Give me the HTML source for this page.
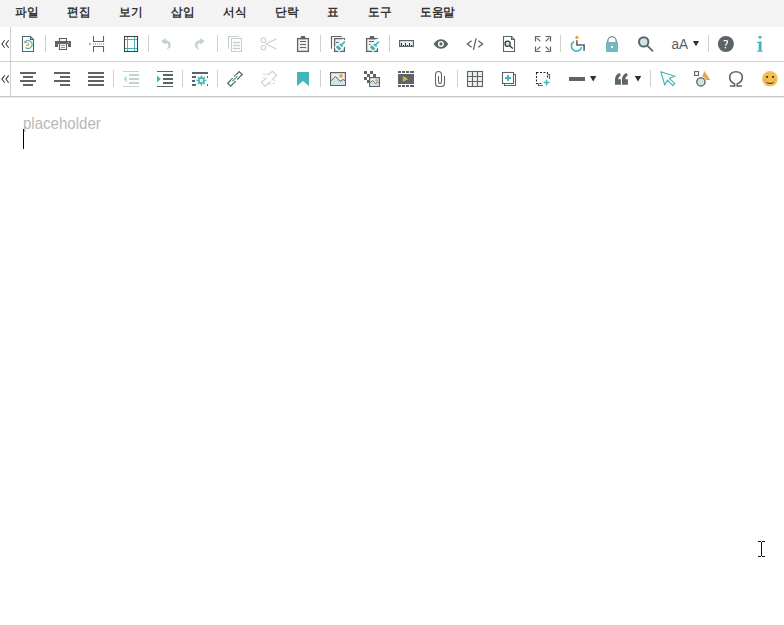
<!DOCTYPE html>
<html><head><meta charset="utf-8">
<style>
html,body{margin:0;padding:0;background:#fff;width:784px;height:625px;overflow:hidden;font-family:"Liberation Sans",sans-serif;}
#menubar{position:absolute;left:0;top:0;width:784px;height:27px;background:#f3f3f3;}
.mi{position:absolute;top:3px;font-size:12px;font-weight:bold;color:#333;line-height:18px;white-space:nowrap;transform:scaleX(0.97);transform-origin:0 0;}
#tb{position:absolute;left:0;top:27px;width:784px;height:70px;background:#fff;}
#ph{position:absolute;left:23px;top:114px;font-size:16px;color:#b8b8b8;line-height:20px;transform:scaleX(0.94);transform-origin:0 0;}
#caret{position:absolute;left:23px;top:129px;width:1px;height:20px;background:#000;}
svg{position:absolute;left:0;top:0;}
</style></head><body>
<div id="menubar">
<span class="mi" style="left:15px">파일</span>
<span class="mi" style="left:67px">편집</span>
<span class="mi" style="left:119px">보기</span>
<span class="mi" style="left:171px">삽입</span>
<span class="mi" style="left:223px">서식</span>
<span class="mi" style="left:275px">단락</span>
<span class="mi" style="left:327px">표</span>
<span class="mi" style="left:368px">도구</span>
<span class="mi" style="left:420px">도움말</span>
</div>
<div id="ph">placeholder</div>
<div id="caret"></div>
<svg width="784" height="625" viewBox="0 0 784 625">
<g shape-rendering="crispEdges">
<rect x="0" y="61" width="784" height="1" fill="#d2d2d2"/>
<rect x="0" y="96" width="784" height="1" fill="#c8c8c8"/>
<rect x="0" y="97" width="784" height="1" fill="#ececec"/>
<rect x="10" y="27" width="1" height="69" fill="#cdcdcd"/>
<!-- separators row1 -->
<g fill="#cfcfcf">
<rect x="45" y="35" width="1" height="17"/>
<rect x="148" y="35" width="1" height="17"/>
<rect x="217" y="35" width="1" height="17"/>
<rect x="320" y="35" width="1" height="17"/>
<rect x="389" y="35" width="1" height="17"/>
<rect x="560" y="35" width="1" height="17"/>
<rect x="708" y="35" width="1" height="17"/>
<!-- row2 -->
<rect x="113" y="70" width="1" height="17"/>
<rect x="182" y="70" width="1" height="17"/>
<rect x="217" y="70" width="1" height="17"/>
<rect x="320" y="70" width="1" height="17"/>
<rect x="457" y="70" width="1" height="17"/>
<rect x="650" y="70" width="1" height="17"/>
</g>
</g>
<!-- chevrons -->
<g fill="none" stroke="#2f3b3e" stroke-width="1.05">
<path d="M4.7,40.3 L1.9,44 L4.7,47.7 M8.7,40.3 L5.9,44 L8.7,47.7"/>
<path d="M4.7,75.4 L1.9,79.1 L4.7,82.8 M8.7,75.4 L5.9,79.1 L8.7,82.8"/>
</g>

<!-- ROW 1 -->
<!-- doc refresh -->
<g fill="none" stroke="#5b6568" stroke-width="1.1">
<path d="M22.5,36.5 H30.5 L33.5,39.5 V51.5 H22.5 Z"/>
<path d="M30.5,36.5 V39.5 H33.5"/>
</g>
<path d="M25.4,41.7 A3.9,3.9 0 1 1 25.6,47.5" fill="none" stroke="#41b5b8" stroke-width="1.15"/>
<path d="M24.3,40.6 L24.6,43.6 L27.2,42.4 Z" fill="#41b5b8"/>
<path d="M28.4,42.6 V45.4 H26" fill="none" stroke="#e9a543" stroke-width="1.25"/>

<!-- printer -->
<rect x="59.5" y="38.5" width="7" height="3" fill="#fff" stroke="#5b6568" stroke-width="1.1"/>
<path d="M55,41 H71 V47 H68 V44 H58 V47 H55 Z" fill="#5b6568"/>
<circle cx="68.4" cy="42.6" r="0.8" fill="#e9a543"/>
<rect x="59.5" y="43.5" width="7" height="6" fill="#fff" stroke="#5b6568" stroke-width="1.1"/>
<rect x="61" y="45" width="4" height="1" fill="#41b5b8"/>
<rect x="61" y="47" width="4" height="1" fill="#41b5b8"/>

<!-- page break -->
<path d="M93.5,36 V41.5 H103.5 V36 M93.5,52 V46.5 H103.5 V52" fill="none" stroke="#5b6568" stroke-width="1.1"/>
<g fill="#e9a543">
<path d="M89,42.2 L91.6,44 L89,45.8 Z"/>
<rect x="93" y="43.3" width="1" height="1.5"/><rect x="95" y="43.3" width="1" height="1.5"/><rect x="97" y="43.3" width="1" height="1.5"/>
<rect x="99" y="43.3" width="1" height="1.5"/><rect x="101" y="43.3" width="1" height="1.5"/><rect x="103" y="43.3" width="1" height="1.5"/>
</g>

<!-- page border -->
<g shape-rendering="crispEdges">
<rect x="127" y="37" width="1" height="14" fill="#41b5b8"/>
<rect x="134" y="37" width="1" height="14" fill="#41b5b8"/>
<rect x="125" y="39" width="12" height="1" fill="#41b5b8"/>
<rect x="125" y="48" width="12" height="1" fill="#41b5b8"/>
</g>
<rect x="124.5" y="36.5" width="13" height="15" fill="none" stroke="#3d4245" stroke-width="1.1"/>

<!-- undo / redo -->
<g fill="#c4d1d3">
<path d="M161,41.3 L165.6,38 L165.6,40.3 C169.5,40.5 171.5,43 170.5,46.5 C169.8,48.2 168,49.3 166,49.7 C167.8,48.3 168.6,46.8 168.3,45.3 C168,43.8 166.8,43 165.6,43 L165.6,44.6 Z"/>
<path d="M204.8,41.3 L200.2,38 L200.2,40.3 C196.3,40.5 194.3,43 195.3,46.5 C196,48.2 197.8,49.3 199.8,49.7 C198,48.3 197.2,46.8 197.5,45.3 C197.8,43.8 199,43 200.2,43 L200.2,44.6 Z"/>
</g>

<!-- copy (disabled) -->
<g fill="none" stroke="#c4d1d3" stroke-width="1.1">
<path d="M228.5,48.7 V36.5 H238.6"/>
<rect x="231.5" y="38.5" width="10" height="13"/>
<path d="M233,42.5 H240 M233,45.5 H240 M233,48.5 H240" stroke-width="1.3"/>
</g>

<!-- scissors -->
<g fill="none" stroke-width="1.1">
<circle cx="263.4" cy="40.2" r="2.3" stroke="#d6d2cc"/>
<circle cx="263.4" cy="47.6" r="2.3" stroke="#d6d2cc"/>
<path d="M265.5,43.8 L276.5,39 M265.5,43.8 L276.5,49" stroke="#c4d1d3" stroke-width="1.2"/>
</g>

<!-- clipboard -->
<rect x="297.6" y="38.6" width="10.8" height="12.8" fill="#f0f0f3" stroke="#5b6568" stroke-width="1.3"/>
<path d="M300,39.2 L301.2,36 H304.8 L306,39.2 Z" fill="#5b6568"/>
<path d="M300,41.5 H306 M300,44.5 H306 M300,47.5 H306" stroke="#5b6568" stroke-width="1.2"/>

<!-- copy format -->
<path d="M331.5,48.7 V36.5 H341.7" fill="none" stroke="#5b6568" stroke-width="1.2"/>
<rect x="334.6" y="38.6" width="9.8" height="12.8" fill="#f0f0f3" stroke="#5b6568" stroke-width="1.3"/>
<rect x="336" y="42" width="3" height="1" fill="#5b6568"/>
<g transform="translate(341.2,45.3) rotate(-45)">
<g fill="#fff"><rect x="-6.3" y="-3.5" width="12.5" height="7"/></g>
<rect x="0" y="-0.8" width="5.2" height="1.6" fill="#41b5b8"/>
<rect x="-0.9" y="-2" width="1.8" height="4" fill="#41b5b8"/>
<rect x="-5.3" y="-2.6" width="3.2" height="5.2" rx="0.8" fill="#41b5b8"/>
</g>
<!-- paste format -->
<rect x="366.6" y="38.6" width="10.8" height="12.8" fill="#f0f0f3" stroke="#5b6568" stroke-width="1.3"/>
<path d="M369,39.2 L370.2,36 H373.8 L375,39.2 Z" fill="#5b6568"/>
<rect x="369" y="41" width="5.5" height="1" fill="#5b6568"/>
<rect x="369" y="44" width="1.5" height="1" fill="#5b6568"/>
<g transform="translate(375.2,45.3) rotate(-45)">
<g fill="#fff"><rect x="-6.3" y="-3.5" width="12.5" height="7"/></g>
<rect x="0" y="-0.8" width="5.2" height="1.6" fill="#41b5b8"/>
<rect x="-0.9" y="-2" width="1.8" height="4" fill="#41b5b8"/>
<rect x="-5.3" y="-2.6" width="3.2" height="5.2" rx="0.8" fill="#41b5b8"/>
</g>
<!-- ruler -->
<rect x="399.6" y="40.6" width="13.8" height="5.8" fill="#f0f0f3" stroke="#5b6568" stroke-width="1.2"/>
<g fill="#2f3537" shape-rendering="crispEdges">
<rect x="401" y="43" width="1" height="3"/><rect x="405" y="43" width="1" height="3"/><rect x="409" y="43" width="1" height="3"/>
<rect x="403" y="45" width="1" height="1"/><rect x="407" y="45" width="1" height="1"/><rect x="411" y="45" width="1" height="1"/>
</g>

<!-- eye -->
<path d="M433.5,44 C436,40.5 438.5,39.3 441,39.3 C443.5,39.3 446,40.5 448.3,44 C446,47.5 443.5,48.7 441,48.7 C438.5,48.7 436,47.5 433.5,44 Z" fill="#5b6568"/>
<circle cx="440.9" cy="43.9" r="3" fill="#fff"/>
<circle cx="440.9" cy="43.9" r="1.6" fill="#5b6568"/>

<!-- code -->
<path d="M471.6,40.7 L467.3,43.9 L471.6,47.3 M478.3,40.7 L482.6,43.9 L478.3,47.3 M476.1,38.3 L473.4,49.9" fill="none" stroke="#5b6568" stroke-width="1.3"/>

<!-- preview -->
<g fill="none" stroke="#5b6568" stroke-width="1.1">
<path d="M503.5,36.5 H511.5 L514.5,39.5 V51.5 H503.5 Z"/>
<path d="M511.5,36.5 V39.5 H514.5"/>
</g>
<circle cx="507.6" cy="43.7" r="2.6" fill="#cfe4e7" stroke="#2f3537" stroke-width="1.2"/>
<path d="M509.4,45.6 L512.8,48.6" stroke="#2f3537" stroke-width="1.3"/>

<!-- fullscreen -->
<path d="M535.5,41.5 V36.5 H540.5 M545.5,36.5 H550.5 V41.5 M550.5,46.5 V51.5 H545.5 M540.5,51.5 H535.5 V46.5 M536.8,37.8 L540.3,41.3 M549.2,37.8 L545.7,41.3 M549.2,50.2 L545.7,46.7 M536.8,50.2 L540.3,46.7" fill="none" stroke="#5b6568" stroke-width="1.2"/>

<!-- accessibility -->
<circle cx="576.9" cy="37.4" r="1.7" fill="#e9a543"/>
<path d="M576.9,40.2 V45 H584.1 V50.8" fill="none" stroke="#5b6568" stroke-width="1.6"/>
<path d="M573.8,41.5 A5.2,5.2 0 1 0 581.6,47.3" fill="none" stroke="#41b5b8" stroke-width="1.6"/>

<!-- lock -->
<path d="M607.8,42.5 V41 A4.2,4.2 0 0 1 616.2,41 V42.5" fill="none" stroke="#5f6a6d" stroke-width="1.1"/>
<rect x="606" y="42" width="12" height="10" fill="#74b8c2"/>
<rect x="611" y="46" width="2" height="2" fill="#fff"/>

<!-- search -->
<circle cx="643.7" cy="41.9" r="4.7" fill="#cfe4e7" stroke="#5b6568" stroke-width="2"/>
<path d="M647.3,45.6 L653,51.3" stroke="#5b6568" stroke-width="1.8"/>

<!-- aA -->
<text x="0" y="0" transform="translate(671.4,48.8) scale(0.93,1)" font-family="Liberation Sans" font-size="14.6" fill="#555e61">aA</text>
<path d="M693,41 H699 L696,46.3 Z" fill="#2a2e30"/>

<!-- help -->
<circle cx="725.9" cy="44" r="8" fill="#5b6568"/>
<path d="M723.6,40.6 H726.4 Q727.9,40.8 727.4,42.4 L725.4,45.8" fill="none" stroke="#fff" stroke-width="1.15"/><rect x="724.8" y="47" width="1.3" height="1.3" fill="#fff"/>

<!-- info -->
<circle cx="760" cy="37.3" r="1.45" fill="#41b5b8"/>
<path d="M757,41.9 L761.5,41.2 V50.7 H762.7 V51.8 H757 V50.7 H758.7 V42.9 H757 Z" fill="#41b5b8"/>

<!-- ROW 2 -->
<g fill="#5b6568" shape-rendering="crispEdges">
<!-- align center -->
<rect x="20" y="72" width="16" height="2"/><rect x="23" y="76" width="10" height="2"/><rect x="20" y="80" width="16" height="2"/><rect x="23" y="84" width="10" height="2"/>
<!-- align right -->
<rect x="54" y="72" width="16" height="2"/><rect x="60" y="76" width="10" height="2"/><rect x="54" y="80" width="16" height="2"/><rect x="60" y="84" width="10" height="2"/>
<!-- justify -->
<rect x="88" y="72" width="16" height="2"/><rect x="88" y="76" width="16" height="2"/><rect x="88" y="80" width="16" height="2"/><rect x="88" y="84" width="16" height="2"/>
<!-- indent -->
<rect x="157" y="71" width="16" height="1"/><rect x="163" y="74" width="10" height="2"/><rect x="163" y="78" width="10" height="2"/><rect x="163" y="82" width="10" height="2"/><rect x="157" y="86" width="16" height="1"/>
</g>
<!-- outdent -->
<g fill="#c4d1d3" shape-rendering="crispEdges">
<rect x="123" y="71" width="16" height="1"/><rect x="129" y="74" width="10" height="2"/><rect x="129" y="78" width="10" height="2"/><rect x="129" y="82" width="10" height="2"/><rect x="123" y="86" width="16" height="1"/>
</g>
<path d="M126.8,75.6 L123.4,79 L126.8,82.4 Z" fill="#b7dde0"/>
<path d="M157,75.5 L160.8,79 L157,82.5 Z" fill="#41b5b8"/>

<!-- paragraph settings -->
<g fill="#5b6568" shape-rendering="crispEdges">
<rect x="192" y="72" width="16" height="2"/>
<rect x="192" y="76" width="4" height="2"/><rect x="207" y="76" width="1" height="2"/>
<rect x="192" y="80" width="3" height="2"/>
<rect x="192" y="84" width="4" height="2"/><rect x="207" y="84" width="1" height="2"/>
</g>
<g transform="translate(201.4,80.5)">
<circle r="5.8" fill="#fff"/>
<path d="M-0.76,-3.31 L-0.78,-4.94 L0.78,-4.94 L0.76,-3.31 L1.80,-2.88 L2.94,-4.05 L4.05,-2.94 L2.88,-1.80 L3.31,-0.76 L4.94,-0.78 L4.94,0.78 L3.31,0.76 L2.88,1.80 L4.05,2.94 L2.94,4.05 L1.80,2.88 L0.76,3.31 L0.78,4.94 L-0.78,4.94 L-0.76,3.31 L-1.80,2.88 L-2.94,4.05 L-4.05,2.94 L-2.88,1.80 L-3.31,0.76 L-4.94,0.78 L-4.94,-0.78 L-3.31,-0.76 L-2.88,-1.80 L-4.05,-2.94 L-2.94,-4.05 L-1.80,-2.88 Z" fill="#41b5b8"/>
<rect x="-1.5" y="-1.5" width="3" height="3" rx="0.6" fill="#fff"/>
<circle r="0.4" fill="#9aa"/>
</g>

<!-- link -->
<g fill="none" stroke="#5b6568" stroke-width="1.3">
<rect x="-2.1" y="-3.2" width="4.2" height="6.4" transform="translate(238.4,75.4) rotate(45)"/>
<rect x="-2.1" y="-3.2" width="4.2" height="6.4" transform="translate(231.5,82.4) rotate(45)"/>
</g>
<path d="M232,81.6 L237.7,75.9" stroke="#fff" stroke-width="3"/>
<path d="M232.3,81.3 L237.5,76.1" stroke="#41b5b8" stroke-width="1.3"/>
<!-- unlink -->
<g fill="none" stroke="#c4d1d3" stroke-width="1.1">
<path d="M268.3,74.6 L272.4,71.3 L276.6,75.2 L271.6,80.4"/>
<path d="M266.8,77.8 L261.3,82.4 L265,86.4 L270.4,81.5"/>
</g>
<g stroke="#d9cfc0" stroke-width="1.1">
<path d="M263.6,73.6 L264.8,75 M267.3,73.3 L267.3,75 M262.8,77.5 L264.7,77.5 M273.8,80.3 L275.4,80.3 M273,83 L274.2,84 M270.3,83.5 L270.3,85.2"/>
</g>

<!-- bookmark -->
<path d="M297,72 H309 V86 L303,81 L297,86 Z" fill="#42b6b8"/>

<!-- image -->
<rect x="330.6" y="72.6" width="14.8" height="12.8" fill="#efeff3" stroke="#5b6568" stroke-width="1.2"/>
<path d="M331.2,80.8 L335.5,76.3 L340.1,81.4 L343.2,79.4 L345,80.8 V85 H331.2 Z" fill="#cfe5e8"/>
<path d="M331.2,80.8 L335.5,76.3 L340.1,81.4 L343.2,79.4 L345,80.8" fill="none" stroke="#5b6568" stroke-width="1"/>
<circle cx="341" cy="75.9" r="1.9" fill="#e9a543"/>

<!-- bg image -->
<g fill="#5b6568" shape-rendering="crispEdges">
<rect x="364" y="71" width="3" height="3"/><rect x="370" y="71" width="3" height="3"/>
<rect x="367" y="74" width="3" height="3"/><rect x="373" y="74" width="3" height="3"/>
<rect x="364" y="77" width="3" height="3"/><rect x="367" y="80" width="3" height="3"/>
</g>
<rect x="369.6" y="77.6" width="9.8" height="8.8" fill="#efeff3" stroke="#5b6568" stroke-width="1.2"/>
<path d="M370.2,82.5 L372.8,80.5 L375.3,83.7 L377.5,82.2 L378.8,83 V85.8 H370.2 Z" fill="#cfe5e8"/>
<path d="M370.2,82.5 L372.8,80.5 L375.3,83.7 L377.5,82.2 L378.8,83" fill="none" stroke="#5b6568" stroke-width="0.9"/>
<circle cx="376.6" cy="80.4" r="1.4" fill="#e9a543"/>

<!-- video -->
<g fill="#5b6568" shape-rendering="crispEdges">
<rect x="398" y="71" width="3" height="2"/><rect x="402" y="71" width="3" height="2"/><rect x="406" y="71" width="3" height="2"/><rect x="410" y="71" width="4" height="2"/>
<rect x="398" y="74" width="16" height="10"/>
<rect x="398" y="85" width="3" height="2"/><rect x="402" y="85" width="3" height="2"/><rect x="406" y="85" width="3" height="2"/><rect x="410" y="85" width="4" height="2"/>
</g>
<path d="M402.8,75.9 L408.4,79 L402.8,82.1 Z" fill="#e9a543"/>

<!-- attach -->
<path d="M444.5,76 V83.5 Q444.5,86.5 441.5,86.5 H438.5 Q435.5,86.5 435.5,83.5 V74.5 Q435.5,71.5 438.5,71.5 Q441.5,71.5 441.5,74.5 V81.5 Q441.5,83.5 440,83.5 Q438.5,83.5 438.5,81.5 V76" fill="none" stroke="#5b6568" stroke-width="1.05"/>

<!-- table -->
<rect x="467.5" y="71.5" width="15" height="15" fill="#efeff3"/>
<g fill="none" stroke="#5b6568" stroke-width="1.1">
<rect x="467.5" y="71.5" width="15" height="15"/>
<path d="M472.5,71.5 V86.5 M477.5,71.5 V86.5 M467.5,76.5 H482.5 M467.5,81.5 H482.5"/>
</g>

<!-- insert box -->
<path d="M513.5,74.5 H515.5 V85.5 H504.5 V83.5" fill="none" stroke="#5b6568" stroke-width="1.1"/>
<rect x="502.5" y="72.5" width="11" height="11" fill="#fff" stroke="#5b6568" stroke-width="1.1"/>
<path d="M505,78 H511 M508,75 V81" stroke="#41b5b8" stroke-width="2"/>

<!-- dashed box -->
<rect x="536.5" y="72.5" width="11" height="11" fill="none" stroke="#222" stroke-width="1.1" stroke-dasharray="2 1.5"/>
<path d="M547.5,74.5 H549.5 V85.5 H538.5 V83.5" fill="none" stroke="#5b6568" stroke-width="1.1"/>
<rect x="543" y="79" width="7" height="7" fill="#fff"/>
<path d="M543.8,82.6 H549.4 M546.6,79.8 V85.4" stroke="#41b5b8" stroke-width="1.5"/>

<!-- hr -->
<rect x="569" y="77" width="16" height="4" fill="#5b6568"/>
<path d="M590,76 H596.3 L593.15,81.5 Z" fill="#2a2e30"/>

<!-- quote -->
<g fill="#5b6568">
<path d="M615,84.8 V79 C615,76.5 616.8,74 619.4,73 L621,75.3 C619.5,76 618.5,77.3 618.3,79.2 H620.9 V84.8 Z"/>
<path d="M622,84.8 V79 C622,76.5 623.8,74 626.4,73 L628,75.3 C626.5,76 625.5,77.3 625.3,79.2 H627.9 V84.8 Z"/>
</g>
<path d="M634.8,76 H641.2 L638,81.4 Z" fill="#2a2e30"/>

<!-- cursor -->
<path d="M660.8,71.7 L675,76.3 L669.4,78.3 L674.8,83.7 L672.9,85.7 L667.4,80.2 L664.8,85 Z" fill="none" stroke="#42b6b8" stroke-width="1.2" stroke-linejoin="round"/>

<!-- shapes -->
<rect x="694.6" y="71.6" width="3.9" height="3.9" fill="none" stroke="#5b6568" stroke-width="1.1"/>
<path d="M704.4,71 L710.2,79.9 L700.5,79.9 Z" fill="#e9a543"/>
<circle cx="700.9" cy="81.9" r="5.6" fill="#fff"/>
<circle cx="700.9" cy="81.9" r="4.1" fill="#cfe4e7" stroke="#5b6568" stroke-width="1.35"/>

<!-- omega -->
<path d="M729.8,86 H734.6 V84 C731.2,82.5 729.7,80.3 729.7,77.6 C729.7,73.8 732.5,71.7 736,71.7 C739.5,71.7 742.3,73.8 742.3,77.6 C742.3,80.3 740.8,82.5 737.2,84 V86 H742" fill="none" stroke="#5b6568" stroke-width="1.6"/>

<!-- smiley -->
<circle cx="769.9" cy="78.7" r="7.8" fill="#f4bf51"/>
<rect x="766.1" y="75.9" width="1.9" height="1.9" rx="0.5" fill="#1d2433"/>
<rect x="772.1" y="75.9" width="1.9" height="1.9" rx="0.5" fill="#1d2433"/>
<rect x="764" y="79.2" width="2.6" height="1.5" fill="#e0a85a"/>
<rect x="773.4" y="79.2" width="2.6" height="1.5" fill="#e0a85a"/>
<path d="M766.2,82.1 Q766.8,83.4 770,83.4 Q773.2,83.4 773.8,82.1" fill="none" stroke="#2a3038" stroke-width="1"/>

<!-- I-beam -->
<g fill="#111" shape-rendering="crispEdges">
<rect x="758" y="541" width="3" height="1"/><rect x="762" y="541" width="3" height="1"/>
<rect x="761" y="542" width="1" height="14"/>
<rect x="758" y="556" width="3" height="1"/><rect x="762" y="556" width="3" height="1"/>
</g>
</svg>
</body></html>
